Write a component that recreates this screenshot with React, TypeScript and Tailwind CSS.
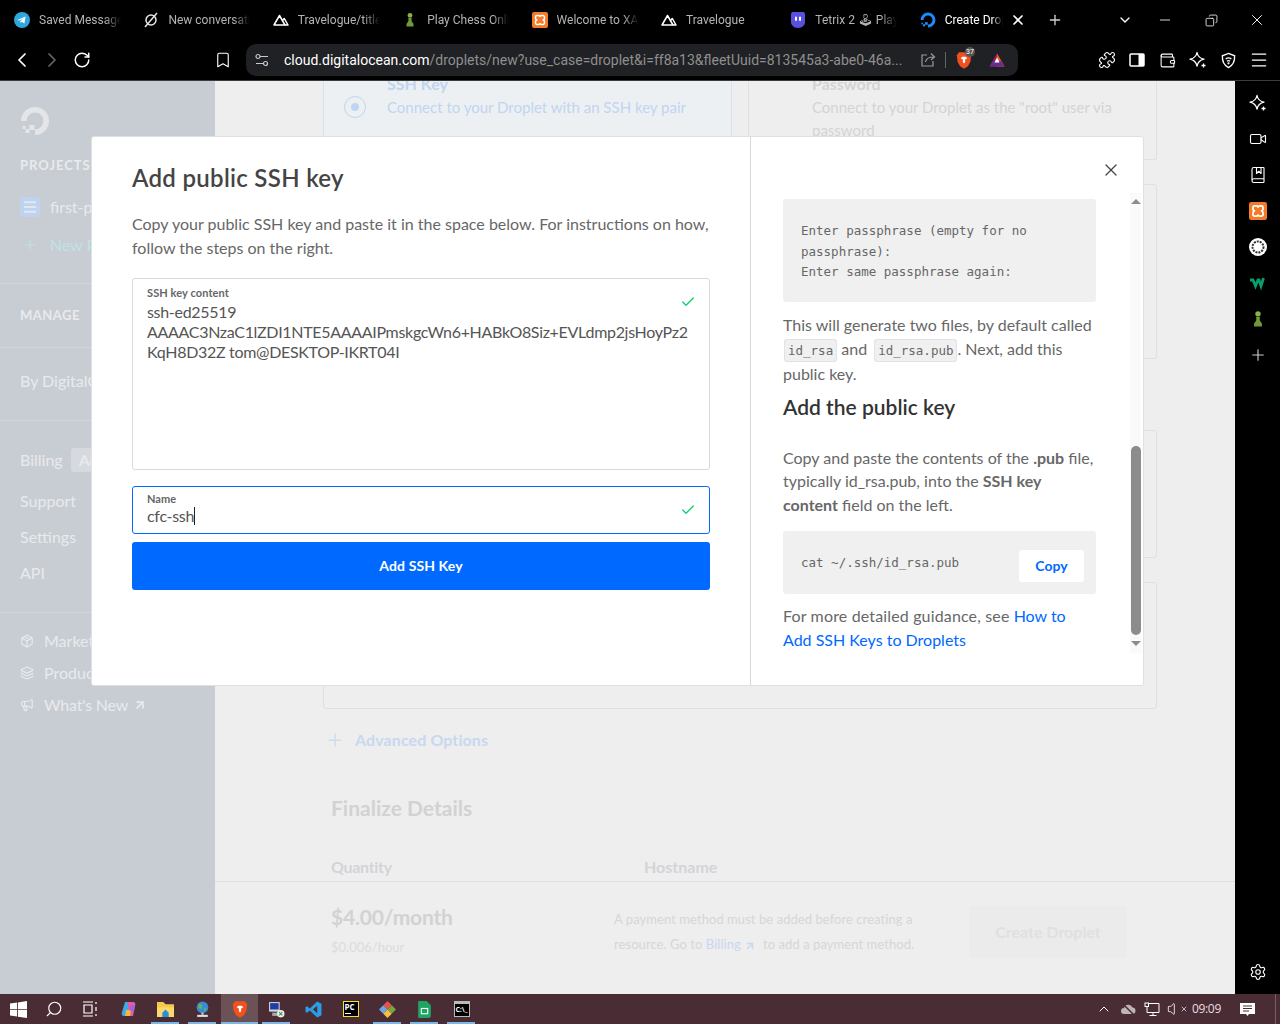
import {
  Bookmark, BookMarked, ChevronDown, ChevronLeft, ChevronRight, ChevronUp, Check, Layers, Menu,
  Megaphone, Minus, Package, Plus, Puzzle, RotateCw, Search, Settings,
  Video, Volume, Wallet, X, ArrowUpRight, Copy,
} from 'lucide-react'

const sans = 'font-["Lato","Open_Sans",sans-serif]'
const mono = 'font-["DejaVu_Sans_Mono",monospace]'

function Telegram() {
  return (
    <svg viewBox="0 0 16 16" className="w-4 h-4">
      <circle cx="8" cy="8" r="8" fill="#2fa6de" />
      <path d="M3.2 7.9 11.6 4.6 10.4 11.6 7.8 9.7 6.5 10.9 6.3 8.9 10.2 5.9 5.4 8.6Z" fill="#fff" />
    </svg>
  )
}

function Xampp({ size = 16 }: { size?: number }) {
  return (
    <svg viewBox="0 0 16 16" width={size} height={size}>
      <rect width="16" height="16" rx="2" fill="#f47a28" />
      <path d="M5 3.5h1.5a1.5 1.5 0 0 1 1.5 1.5 1.5 1.5 0 0 1 1.5-1.5H11a1.5 1.5 0 0 1 1.5 1.5v1A2 2 0 0 1 10.5 8a2 2 0 0 1 2 2v1a1.5 1.5 0 0 1-1.5 1.5H9.5A1.5 1.5 0 0 1 8 11a1.5 1.5 0 0 1-1.5 1.5H5A1.5 1.5 0 0 1 3.5 11v-1a2 2 0 0 1 2-2 2 2 0 0 1-2-2V5A1.5 1.5 0 0 1 5 3.5Z" fill="none" stroke="#fff" strokeWidth="1.5" />
    </svg>
  )
}

function Peaks() {
  return (
    <svg viewBox="0 0 16 16" className="w-4 h-4" fill="none" stroke="#fff" strokeWidth="1.5" strokeLinejoin="round">
      <path d="M1 13 6.5 3.5 12 13Z" />
      <path d="M9.5 8.5 11.3 6.5 15 13H12" />
    </svg>
  )
}

function Pawn({ size = 16 }: { size?: number }) {
  return (
    <svg viewBox="0 0 16 16" width={size} height={size}>
      <circle cx="8" cy="3.4" r="2.4" fill="#8ab04a" />
      <path d="M6.3 6h3.4L9.5 8.6c.3 1.6 1.6 2.4 2 3.4v2.6h-7V12c.4-1 1.7-1.8 2-3.4Z" fill="#6f9a38" />
    </svg>
  )
}

function OceanLogo({ color, size }: { color: string; size: number }) {
  return (
    <svg viewBox="0 0 30 30" width={size} height={size} fill={color}>
      <path d="M15 29v-5.6a8.4 8.4 0 1 0-8.4-8.4H1A14 14 0 1 1 15 29Z" />
      <rect x="9.5" y="19" width="5" height="5" />
      <rect x="5.5" y="23" width="4" height="4" />
      <rect x="2.5" y="20" width="3" height="3" />
    </svg>
  )
}

function Lion({ size = 16 }: { size?: number }) {
  return (
    <svg viewBox="0 0 16 16" width={size} height={size}>
      <path d="M3.5 1h9l1.8 2.8-.6 5.7-2.2 4L8 15.8l-3.5-2.3-2.2-4L1.7 3.8Z" fill="#f1501f" />
      <path d="M5 6.5 7 7.5V10L8 11l1-1V7.5L11 6.5 9.5 5h-3Z" fill="#fff" />
    </svg>
  )
}

function Triangle() {
  return (
    <svg viewBox="0 0 16 16" className="w-4 h-4">
      <path d="M8 1.5 15.5 14.5H.5Z" fill="#9e1f63" />
      <path d="M8 1.5 15.5 14.5H8Z" fill="#f15a29" />
      <path d="M.5 14.5 4 9h8l3.5 5.5Z" fill="#662d91" />
      <path d="M8 5.5 10.5 10.5H5.5Z" fill="#fff" />
    </svg>
  )
}

function Star({ size = 18 }: { size?: number }) {
  return (
    <svg viewBox="0 0 18 18" width={size} height={size} fill="none" stroke="#fff" strokeWidth="1.3" strokeLinejoin="round">
      <path d="M8 1.5Q9 7 15 8.2 9.2 9.5 8 15 6.8 9.5 1 8.2 7 7 8 1.5Z" />
      <path d="M14.5 12.5v4M12.5 14.5h4" />
    </svg>
  )
}

function Tab({ icon, title, active }: { icon: React.ReactNode; title: string; active?: boolean }) {
  return (
    <div className="w-[129.4px] flex items-center pl-[6px] gap-[9px] shrink-0">
      <span className="w-4 h-4 shrink-0 flex items-center justify-center">{icon}</span>
      <span className={`overflow-hidden whitespace-nowrap text-[12px] [mask-image:linear-gradient(to_right,black_80%,transparent)] ${active ? 'w-[58px] text-white' : 'w-[82px] text-[#b4b4b4]'}`}>
        {title}
      </span>
    </div>
  )
}

function Chrome() {
  return (
    <div className='h-[81px] bg-black border-b border-[#3c3c3c] shrink-0 font-["Roboto",sans-serif]'>
      <div className="h-10 flex items-center pl-[8px] relative">
        <Tab icon={<Telegram />} title="Saved Messages" />
        <Tab
          icon={
            <svg viewBox="0 0 16 16" className="w-4 h-4" fill="none" stroke="#e5e5e5" strokeWidth="1.5">
              <circle cx="8" cy="8" r="5" />
              <path d="M2 15 14 1" />
            </svg>
          }
          title="New conversation"
        />
        <Tab icon={<Peaks />} title="Travelogue/title" />
        <Tab icon={<Pawn />} title="Play Chess Online" />
        <Tab icon={<Xampp />} title="Welcome to XAMPP" />
        <Tab icon={<Peaks />} title="Travelogue" />
        <Tab
          icon={
            <svg viewBox="0 0 16 16" className="w-4 h-4">
              <path d="M2 0h12l1 2v8c0 3-3 6-7 6s-7-3-7-6V2Z" fill="#5a50e0" />
              <rect x="5" y="4.5" width="2" height="4.5" rx="1" fill="#fff" />
              <rect x="9" y="4.5" width="2" height="4.5" rx="1" fill="#fff" />
            </svg>
          }
          title="Tetrix 2 🕹 Play"
        />
        <Tab icon={<OceanLogo color="#1a8cff" size={16} />} title="Create Droplet" active />
        <X className="w-4 h-4 text-white -ml-[33px]" strokeWidth={2.5} />
        <Plus className="w-4 h-4 text-[#cfcfcf] ml-[21px]" />
        <ChevronDown className="w-4 h-4 text-white ml-[54px]" />
        <Minus className="w-4 h-4 text-white ml-[24px]" strokeWidth={1.25} />
        <Copy className="w-[13px] h-[13px] text-white ml-[32px] -scale-x-100" strokeWidth={1.5} />
        <X className="w-[18px] h-[18px] text-white ml-[30px]" strokeWidth={1.25} />
      </div>
      <div className="h-10 flex items-center text-white">
        <ChevronLeft className="w-6 h-6 ml-[10px]" strokeWidth={1.75} />
        <ChevronRight className="w-6 h-6 ml-[6px] text-[#666]" strokeWidth={1.75} />
        <RotateCw className="w-[18px] h-[18px] ml-[9px]" strokeWidth={2} />
        <Bookmark className="w-[18px] h-[18px] ml-[123px]" strokeWidth={1.5} />
        <div className="ml-[14px] w-[772px] h-8 rounded-[10px] bg-[#202124] flex items-center pl-[9px] pr-[12px]">
          <svg viewBox="0 0 14 14" className="w-[14px] h-[14px]" fill="none" stroke="#c8c8c8" strokeWidth="1.2">
            <circle cx="3" cy="3.5" r="2" />
            <path d="M5 3.5h8M1 10.5h7" />
            <circle cx="10.5" cy="10.5" r="2" />
          </svg>
          <span className="ml-[15px] w-[620px] whitespace-nowrap overflow-hidden text-[14px] text-[#8f8f8f]">
            <span className="text-white">cloud.digitalocean.com</span>/droplets/new?use_case=droplet&amp;i=ff8a13&amp;fleetUuid=813545a3-abe0-46a...
          </span>
          <svg viewBox="0 0 16 16" className="w-4 h-4 ml-[16px]" fill="none" stroke="#9a9a9a" strokeWidth="1.2">
            <path d="M7 3H2v11h11V9" />
            <path d="M5.5 10C6 6.5 8.5 5 14 5M11 1.5 14.5 5 11 8" />
          </svg>
          <span className="w-px h-4 bg-[#666] ml-[9px]" />
          <span className="relative ml-[9px]">
            <Lion size={18} />
            <span className="absolute -top-[4px] left-[10px] w-[10px] h-[10px] rounded-full bg-[#555] text-[7px] leading-[10px] text-center text-white">37</span>
          </span>
          <span className="ml-[16px]"><Triangle /></span>
        </div>
        <Puzzle className="w-[18px] h-[18px] ml-[80px]" strokeWidth={1.5} />
        <svg viewBox="0 0 18 18" className="w-[18px] h-[18px] ml-[12px]">
          <rect x="2" y="3" width="14" height="12" rx="1" fill="none" stroke="#fff" strokeWidth="1.5" />
          <rect x="10.5" y="3" width="5.5" height="12" fill="#fff" />
        </svg>
        <Wallet className="w-[17px] h-[17px] ml-[13px]" strokeWidth={1.5} />
        <span className="ml-[13px]"><Star /></span>
        <svg viewBox="0 0 18 18" className="w-[17px] h-[17px] ml-[13px]" fill="none" stroke="#fff" strokeWidth="1.4">
          <path d="M9 1.5 15.5 4c.3 6-1.5 10-6.5 12.5C4 14 2.2 10 2.5 4Z" />
          <path d="M6 7.5a4.5 4.5 0 0 1 6 0M7.5 9.8a2.2 2.2 0 0 1 3 0" />
          <circle cx="9" cy="12" r=".5" />
        </svg>
        <Menu className="w-5 h-5 ml-[12px]" strokeWidth={1.5} />
      </div>
    </div>
  )
}

function Sidebar() {
  return (
    <aside className={`w-[215px] bg-[#c8cdd4] text-[#e8eaec] shrink-0 overflow-hidden ${sans}`}>
      <div className="pl-5 pt-[25px] h-[203px] border-b border-[#d4d7dc]">
        <OceanLogo color="#e3e5e8" size={30} />
        <div className="mt-[21px] text-[13px] font-bold tracking-[1px] leading-4">PROJECTS</div>
        <div className="mt-[24px] flex items-center gap-[10px] text-[16px] leading-5">
          <span className="w-5 h-5 bg-[#bed3ef] rounded-[3px] flex items-center justify-center">
            <Menu className="w-4 h-4 text-[#e3e8ef]" strokeWidth={3} />
          </span>
          first-project
        </div>
        <div className="mt-[18px] flex items-center gap-[13px] pl-[3px] text-[16px] leading-5 text-[#bfe3e3]">
          <Plus className="w-[14px] h-[14px]" strokeWidth={2} />
          New Project
        </div>
      </div>
      <div className="pl-5 h-[64px] border-b border-[#d4d7dc] flex items-center text-[13px] font-bold tracking-[0.5px]">MANAGE</div>
      <div className="pl-5 h-[73px] border-b border-[#d4d7dc] flex items-center text-[16px] pb-[6px]">By DigitalOcean</div>
      <div className="pl-5 h-[192px] border-b border-[#d4d7dc] text-[16px] leading-5 pt-[27px]">
        <div className="flex items-center gap-2">Billing <span className="bg-[#d6d9de] rounded-[3px] px-2 py-[2px] font-bold">Add</span></div>
        <div className="mt-[19px]">Support</div>
        <div className="mt-[16px]">Settings</div>
        <div className="mt-[16px]">API</div>
      </div>
      <div className="pl-5 pt-[18px] text-[16px] leading-5 flex flex-col gap-3">
        <div className="flex items-center gap-[10px]"><Package className="w-[14px] h-[14px]" />Marketplace</div>
        <div className="flex items-center gap-[10px]"><Layers className="w-[14px] h-[14px]" />Product Docs</div>
        <div className="flex items-center gap-[10px] tracking-[-0.2px]"><Megaphone className="w-[14px] h-[14px]" />What's New <ArrowUpRight className="w-[14px] h-[14px] -ml-[5px]" strokeWidth={3} /></div>
      </div>
    </aside>
  )
}

function PageContent() {
  return (
    <main className={`flex-1 bg-[#eeeeee] flex flex-col min-w-0 ${sans}`}>
      <div className="flex-1 overflow-hidden pl-[108px] pr-[78px]">
        <div className="flex gap-4 -mt-[1px]">
          <div className="w-[409px] h-[80px] border border-t-0 border-[#dbe1ea] rounded-b-[3px] pl-[20px] pt-[16px] flex items-start gap-[21px] text-[#c0d5f0] text-[16px] bg-[#edf0f3]">
            <span className="w-[22px] h-[22px] rounded-full border border-[#c0d5f0] flex items-center justify-center shrink-0">
              <span className="w-2 h-2 rounded-full bg-[#c0d5f0]" />
            </span>
            <div className="-mt-[21px]">
              <div className="leading-[18px] font-bold">SSH Key</div>
              <div className="mt-[4px] leading-5 text-[15px]">Connect to your Droplet with an SSH key pair</div>
            </div>
          </div>
          <div className="w-[409px] h-[80px] border border-t-0 border-[#dfe0e2] rounded-b-[3px] pl-[63px] text-[#d4d4d4]">
            <div className="-mt-[5px] text-[16px] leading-[18px] font-bold">Password</div>
            <div className="mt-[3px] text-[15px] leading-[23px]">Connect to your Droplet as the "root" user via password</div>
          </div>
        </div>
        <div className="mt-[24px] h-[175px] border border-[#dfe0e2] rounded-[3px]" />
        <div className="mt-[71px] h-[128px] border border-[#dfe0e2] rounded-[3px]" />
        <div className="mt-[24px] h-[127px] border border-[#dfe0e2] rounded-[3px]" />
        <div className="mt-[21px] ml-[2px] flex items-center gap-[10px] text-[16px] tracking-[0.1px] font-bold leading-5 text-[#c8d8ee]">
          <Plus className="w-[20px] h-[20px]" strokeWidth={1.5} />
          Advanced Options
        </div>
        <div className="mt-[44px] ml-[8px] text-[21px] font-bold text-[#d2d2d2] leading-7">Finalize Details</div>
        <div className="mt-[35px] ml-[8px] flex text-[16px] font-bold text-[#d2d4d8] leading-5">
          <span className="w-[313px] tracking-[-0.3px]">Quantity</span><span>Hostname</span>
        </div>
      </div>
      <div className="h-[113px] shrink-0 border-t border-[#dfdfdf] flex pl-[116px] pt-[23px]">
        <div className="w-[283px]">
          <div className="text-[21px] font-bold text-[#d2d2d2] leading-6 tracking-[-0.2px]">$4.00/month</div>
          <div className="mt-[8px] text-[13px] text-[#dcdcdc] leading-5">$0.006/hour</div>
        </div>
        <div className="w-[302px] mr-[53px] mt-[2px] text-[13px] tracking-[0.06px] text-[#d6d6d6] leading-[25px]">
          A payment method must be added before creating a resource. Go to <span className="text-[#c8d8ee]">Billing <ArrowUpRight className="inline w-3 h-3" strokeWidth={3} /></span> &nbsp;to add a payment method.
        </div>
        <div className="w-[158px] h-[52px] mt-[1px] bg-[#ebebeb] rounded-[3px] flex items-center justify-center text-[16px] font-bold text-[#e0e0e0]">Create Droplet</div>
      </div>
    </main>
  )
}

function RightRail() {
  return (
    <div className="w-[45px] bg-black shrink-0 flex flex-col items-center pt-[13px] text-white">
      <div className="flex flex-col items-center gap-[18px] flex-1">
        <Star />
        <Video className="w-[18px] h-[18px]" strokeWidth={1.5} />
        <BookMarked className="w-[18px] h-[18px]" strokeWidth={1.5} />
        <Xampp size={18} />
        <svg viewBox="0 0 18 18" className="w-[18px] h-[18px]">
          <circle cx="9" cy="9" r="9" fill="#fff" />
          <circle cx="9" cy="9" r="5.5" fill="none" stroke="#333" strokeWidth="2" strokeDasharray="2 1" />
        </svg>
        <svg viewBox="0 0 18 18" className="w-[18px] h-[18px]">
          <path d="M1 6h3l2.5 6L9 6h1l2 6 2.5-8" fill="none" stroke="#0b9b6d" strokeWidth="2.8" />
        </svg>
        <Pawn size={18} />
        <Plus className="w-[18px] h-[18px] text-[#cfcfcf]" strokeWidth={1.5} />
      </div>
      <Settings className="w-[18px] h-[18px] mb-[13px]" strokeWidth={1.5} />
    </div>
  )
}

function TaskSlot({ children, on, active, className = 'w-[37px]' }: { children: React.ReactNode; on?: boolean; active?: boolean; className?: string }) {
  return (
    <div className={`h-[30px] relative flex items-center justify-center shrink-0 ${className} ${active ? 'bg-[#6b5257]' : ''}`}>
      {children}
      {on && <span className={`absolute bottom-0 h-[2px] bg-[#7db7e8] ${active ? 'left-0 right-0' : 'left-[4px] right-[5px]'}`} />}
    </div>
  )
}

function Taskbar() {
  return (
    <div className='h-[30px] bg-[#4a2c35] flex items-center shrink-0 text-white font-["Open_Sans",sans-serif]'>
      <TaskSlot className="w-[36px]">
        <svg viewBox="0 0 16 16" className="w-[17px] h-[17px]" fill="#fff"><path d="M0 2.3 6.7 1.4v6.1H0ZM7.5 1.3 16 0v7.5H7.5ZM0 8.3h6.7v6.3L0 13.7ZM7.5 8.3H16V16l-8.5-1.2Z" /></svg>
      </TaskSlot>
      <TaskSlot className="w-[36px]"><Search className="w-[18px] h-[18px] -scale-x-100" strokeWidth={1.5} /></TaskSlot>
      <TaskSlot className="w-[36px]">
        <svg viewBox="0 0 16 16" className="w-4 h-4" fill="none" stroke="#fff" strokeWidth="1.2"><path d="M1 1h10M1 15h10M2 4h8v8H2ZM14 1v2M14 6v4M14 13v2" /></svg>
      </TaskSlot>
      <TaskSlot className="w-[37px] ml-[2px]">
        <svg viewBox="0 0 16 16" className="w-4 h-4"><path d="M4 1h5L7 15H3C1 15 0 13 1 11Z" fill="#3fa9e8" /><path d="M7 1h5c2 0 3 2 2 4l-2 10H7Z" fill="#e85aa8" /><path d="M5 9h5l-1 6H4Z" fill="#f5b93a" /><path d="M10 4h4l-1 6H9Z" fill="#8a6de0" /></svg>
      </TaskSlot>
      <TaskSlot on>
        <svg viewBox="0 0 16 16" className="w-[17px] h-[17px]"><path d="M0 1h6l2 2h8v12H0Z" fill="#f7c948" /><path d="M0 6h16v9H0Z" fill="#fbd96b" /><path d="M5 11l3-3 3 3v4H5Z" fill="#2a8fd8" /></svg>
      </TaskSlot>
      <TaskSlot on>
        <svg viewBox="0 0 16 16" className="w-[17px] h-[17px]"><circle cx="8" cy="6" r="5.5" fill="#3b8ad9" /><path d="M5 2 8 4 7 8 4 6ZM9 6l3 1-2 3Z" fill="#5cb85c" /><rect x="7" y="11" width="2" height="2" fill="#ccc" /><rect x="3" y="13" width="10" height="2" fill="#ddd" /></svg>
      </TaskSlot>
      <TaskSlot on active><Lion size={18} /></TaskSlot>
      <TaskSlot on>
        <svg viewBox="0 0 16 16" className="w-[17px] h-[17px]"><rect x="1" y="1" width="10" height="9" fill="#d5d5d5" /><rect x="2" y="2" width="8" height="6" fill="#1c3fa8" /><rect x="4" y="11" width="5" height="3" fill="#aaa" /><circle cx="12" cy="12" r="3.5" fill="#eee" /><path d="M10.5 13.5 13.5 10.5M10.5 10.5 13.5 13.5" stroke="#2c9a3c" /></svg>
      </TaskSlot>
      <TaskSlot>
        <svg viewBox="0 0 16 16" className="w-[17px] h-[17px]"><path d="M11.5.5 15.5 2.5V13.5L11.5 15.5 4.5 9 1.8 11 .5 10.3V5.7L1.8 5 4.5 7ZM11.5 4.5 7.5 8l4 3.5Z" fill="#2a9ee8" /></svg>
      </TaskSlot>
      <TaskSlot>
        <span className="w-4 h-4 bg-black border border-[#f5e13b] text-[8px] leading-[9px] pl-px text-white font-bold">PC<span className="block w-[6px] h-px bg-white mt-[2px]" /></span>
      </TaskSlot>
      <TaskSlot on>
        <svg viewBox="0 0 16 16" className="w-[17px] h-[17px]"><path d="M8 0 12 4 8 8 4 4Z" fill="#e5534b" /><path d="M4 4 8 8 4 12 0 8Z" fill="#6ca6e8" /><path d="M12 4 16 8 12 12 8 8Z" fill="#7aa53a" /><path d="M8 8 12 12 8 16 4 12Z" fill="#f0c43c" /></svg>
      </TaskSlot>
      <TaskSlot on>
        <svg viewBox="0 0 16 16" className="w-[17px] h-[17px]"><path d="M3 0h7l4 4v10a2 2 0 0 1-2 2H3a1 1 0 0 1-1-1V1a1 1 0 0 1 1-1Z" fill="#1fa463" /><rect x="5" y="7" width="6" height="5" fill="none" stroke="#fff" /></svg>
      </TaskSlot>
      <TaskSlot on>
        <span className="w-4 h-4 bg-black border border-[#bbb] border-t-[3px] text-[7px] leading-[11px] text-white font-bold text-center">C:\_</span>
      </TaskSlot>
      <div className="flex-1" />
      <ChevronUp className="w-4 h-4" strokeWidth={1.5} />
      <svg viewBox="0 0 16 16" className="w-4 h-4 ml-[8px]" fill="#bdb5b7"><path d="M4 13a3 3 0 0 1 0-6 4.5 4.5 0 0 1 8.5-.5A3.2 3.2 0 0 1 12 13Z" /><path d="M2 2 14 14" stroke="#4a2c35" strokeWidth="1.5" /></svg>
      <svg viewBox="0 0 16 16" className="w-4 h-4 ml-[8px]" fill="none" stroke="#fff" strokeWidth="1">
        <path d="M4 2.5h11v9H3V6M9 11.5V14M5.5 14.5h7" />
        <rect x="1" y="2" width="3.5" height="3.5" />
      </svg>
      <span className="flex items-center ml-[7px]"><Volume className="w-4 h-4" strokeWidth={1.25} /><X className="w-[8px] h-[8px] -ml-[3px]" /></span>
      <span className="ml-[4px] text-[12px] text-[#e5dfe0] tracking-[-0.3px]">09:09</span>
      <svg viewBox="0 0 17 17" className="w-[17px] h-[17px] ml-[18px]">
        <path d="M1 2h15v11h-6l-1.5 2L7 13H1Z" fill="#fff" />
        <path d="M4 5h9M4 7.5h9M4 10h6" stroke="#4a2c35" />
      </svg>
      <span className="ml-[19px] mr-[4px] w-px h-full bg-[#75606a]" />
    </div>
  )
}

function Modal() {
  return (
    <div className={`absolute left-[91px] top-[55px] w-[1053px] h-[550px] bg-white border border-[#e0e0e0] rounded-[3px] flex ${sans}`}>
      <div className="w-[659px] shrink-0 border-r border-[#d8d8d8] pl-[40px] pr-[40px] pt-[26px]">
        <h2 className="text-[24px] leading-[30px] font-semibold text-[#444] tracking-[0.3px]">Add public SSH key</h2>
        <p className="mt-[19px] text-[16px] leading-6 text-[#676767] whitespace-nowrap">
          Copy your public SSH key and paste it in the space below. For instructions on how,<br />follow the steps on the right.
        </p>
        <div className="relative mt-[18px] h-[192px] border border-[#d9d9d9] rounded-[3px] px-[14px] pt-[8px]">
          <div className="text-[11px] leading-3 font-bold text-[#666] tracking-[0.1px]">SSH key content</div>
          <div className="mt-[3px] text-[16px] leading-5 text-[#555] whitespace-nowrap tracking-[-0.31px]">
            ssh-ed25519<br />AAAAC3NzaC1lZDI1NTE5AAAAIPmskgcWn6+HABkO8Siz+EVLdmp2jsHoyPz2<br />KqH8D32Z tom@DESKTOP-IKRT04I
          </div>
          <Check className="absolute right-[13px] top-[15px] w-4 h-4 text-[#15cd72]" strokeWidth={2} />
        </div>
        <div className="relative mt-[16px] h-[48px] border border-[#0069ff] rounded-[3px] px-[14px] pt-[6px]">
          <div className="text-[11px] leading-3 font-bold text-[#666]">Name</div>
          <div className="mt-[1px] text-[16px] leading-5 text-[#555] flex items-center tracking-[-0.3px]">cfc-ssh<span className="w-px h-[18px] bg-[#222]" /></div>
          <Check className="absolute right-[13px] top-[15px] w-4 h-4 text-[#15cd72]" strokeWidth={2} />
        </div>
        <button className="mt-[8px] w-full h-[48px] pb-[2px] rounded-[3px] bg-[#0069ff] text-white text-[14px] font-bold tracking-[0.1px]">Add SSH Key</button>
      </div>
      <div className="relative flex-1 min-w-0 flex">
        <div className="w-[345px] shrink-0 pl-[32px] pt-[62px] overflow-hidden">
          <pre className={`bg-[#f0f0f0] rounded-[3px] h-[103px] px-[18px] pt-[22px] text-[12.5px] leading-[20.5px] text-[#676767] ${mono}`}>
            Enter passphrase (empty for no{'\n'}passphrase):{'\n'}Enter same passphrase again:
          </pre>
          <p className="mt-[11px] text-[16px] leading-[23.5px] text-[#676767] w-[314px]">
            This will generate two files, by default called{' '}
            <code className={`ml-[1px] bg-[#f0f0f0] border border-[#e2e2e2] rounded-[3px] px-[3px] py-[3px] text-[12.5px] ${mono}`}>id_rsa</code>{' '}and{' '}
            <code className={`ml-[3px] bg-[#f0f0f0] border border-[#e2e2e2] rounded-[3px] px-[3px] py-[3px] text-[12.5px] ${mono}`}>id_rsa.pub</code>. Next, add this public key.
          </p>
          <h3 className="mt-[7px] text-[21px] leading-7 font-semibold text-[#333]">Add the public key</h3>
          <p className="mt-[25px] text-[16px] leading-[23.5px] text-[#676767] w-[314px]">
            Copy and paste the contents of the <b>.pub</b> file, typically id_rsa.pub, into the <b>SSH key content</b> field on the left.
          </p>
          <div className="mt-[15px] h-[63px] bg-[#f0f0f0] rounded-[3px] flex items-center justify-between pl-[18px] pr-[12px]">
            <code className={`mt-[1px] text-[12.5px] text-[#676767] ${mono}`}>cat ~/.ssh/id_rsa.pub</code>
            <span className="mt-[6px] w-[65px] h-[32px] bg-white rounded-[3px] flex items-center justify-center text-[14px] font-bold text-[#0069ff]">Copy</span>
          </div>
          <p className="mt-[10px] text-[16px] leading-6 text-[#676767] w-[310px]">
            <span className="tracking-[0.15px]">For more detailed guidance, see</span> <span className="text-[#0069ff]">How to Add SSH Keys to Droplets</span>
          </p>
        </div>
        <X className="absolute top-[23px] right-[22px] w-5 h-5 text-[#444]" strokeWidth={1.5} />
        <div className="absolute right-[2px] top-[56px] w-[11px] h-[460px] bg-[#fafafa] flex flex-col items-center">
          <span className="mt-[6px] w-0 h-0 border-x-[5px] border-x-transparent border-b-[5px] border-b-[#8c8c8c]" />
          <span className="mt-[242px] w-[10px] h-[189px] bg-[#8c8c8c] rounded-[5px]" />
          <span className="mt-[6px] w-0 h-0 border-x-[5px] border-x-transparent border-t-[5px] border-t-[#8c8c8c]" />
        </div>
      </div>
    </div>
  )
}

export default function App() {
  return (
    <div className="w-[1280px] h-[1024px] flex flex-col overflow-hidden bg-black">
      <Chrome />
      <div className="relative flex-1 flex min-h-0">
        <Sidebar />
        <PageContent />
        <RightRail />
        <Modal />
      </div>
      <Taskbar />
    </div>
  )
}
